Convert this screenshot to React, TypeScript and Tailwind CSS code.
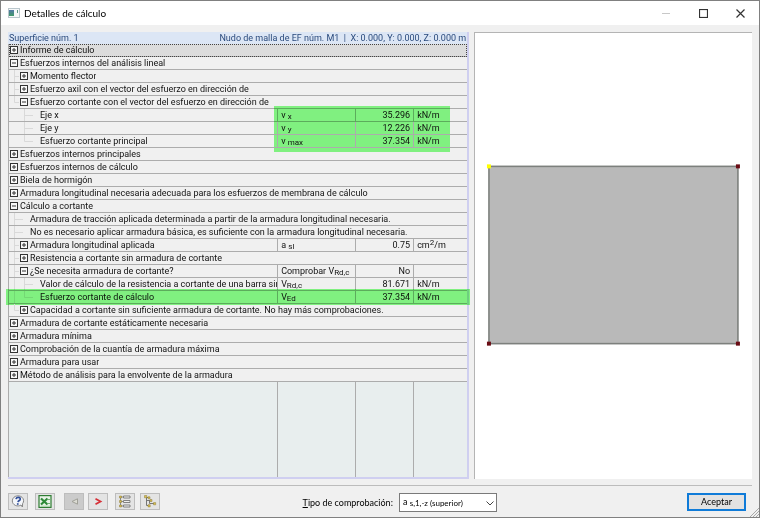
import React from "react";
import clsx from "clsx";

type Guide = "blank" | "line" | "tee" | "end";

interface DetailRow {
  label: string;
  guides?: Guide[];
  toggle?: "plus" | "minus";
  values?: [React.ReactNode, string, React.ReactNode];
  highlight?: "block" | "row";
}

const sym = (base: string, sub: string) => (
  <>
    {base}
    <sub className="relative top-px align-baseline text-[8px] leading-none">{sub}</sub>
  </>
);

const rows: DetailRow[] = [
  { label: "Informe de cálculo", toggle: "plus" },
  { label: "Esfuerzos internos del análisis lineal", toggle: "minus" },
  { label: "Momento flector", guides: ["tee"], toggle: "plus" },
  { label: "Esfuerzo axil con el vector del esfuerzo en dirección de", guides: ["tee"], toggle: "plus" },
  { label: "Esfuerzo cortante con el vector del esfuerzo en dirección de", guides: ["end"], toggle: "minus" },
  { label: "Eje x", guides: ["blank", "tee"], values: [sym("v ", "x"), "35.296", "kN/m"], highlight: "block" },
  { label: "Eje y", guides: ["blank", "tee"], values: [sym("v ", "y"), "12.226", "kN/m"] },
  { label: "Esfuerzo cortante principal", guides: ["blank", "end"], values: [sym("v ", "max"), "37.354", "kN/m"] },
  { label: "Esfuerzos internos principales", toggle: "plus" },
  { label: "Esfuerzos internos de cálculo", toggle: "plus" },
  { label: "Biela de hormigón", toggle: "plus" },
  { label: "Armadura longitudinal necesaria adecuada para los esfuerzos de membrana de cálculo", toggle: "plus" },
  { label: "Cálculo a cortante", toggle: "minus" },
  { label: "Armadura de tracción aplicada determinada a partir de la armadura longitudinal necesaria.", guides: ["tee"] },
  { label: "No es necesario aplicar armadura básica, es suficiente con la armadura longitudinal necesaria.", guides: ["tee"] },
  {
    label: "Armadura longitudinal aplicada",
    guides: ["tee"],
    toggle: "plus",
    values: [
      sym("a ", "sl"),
      "0.75",
      <>
        cm<sup className="relative -top-[3px] align-baseline text-[8px] leading-none">2</sup>/m
      </>,
    ],
  },
  { label: "Resistencia a cortante sin armadura de cortante", guides: ["tee"], toggle: "plus" },
  {
    label: "¿Se necesita armadura de cortante?",
    guides: ["tee"],
    toggle: "minus",
    values: [sym("Comprobar V", "Rd,c"), "No", ""],
  },
  {
    label: "Valor de cálculo de la resistencia a cortante de una barra sin a",
    guides: ["line", "tee"],
    values: [sym("V", "Rd,c"), "81.671", "kN/m"],
  },
  {
    label: "Esfuerzo cortante de cálculo",
    guides: ["line", "end"],
    values: [sym("V", "Ed"), "37.354", "kN/m"],
    highlight: "row",
  },
  {
    label: "Capacidad a cortante sin suficiente armadura de cortante. No hay más comprobaciones.",
    guides: ["end"],
    toggle: "plus",
  },
  { label: "Armadura de cortante estáticamente necesaria", toggle: "plus" },
  { label: "Armadura mínima", toggle: "plus" },
  { label: "Comprobación de la cuantía de armadura máxima", toggle: "plus" },
  { label: "Armadura para usar", toggle: "plus" },
  { label: "Método de análisis para la envolvente de la armadura", toggle: "plus" },
];

const guidePaths: Record<Guide, string> = {
  blank: "",
  line: "M5.5 0V13",
  tee: "M5.5 0V13M5.5 6.5H10",
  end: "M5.5 0V6.5H10",
};

const TreeGuide = ({ d }: { d: string }) => (
  <svg width="10" height="13" viewBox="0 0 10 13" className="shrink-0" fill="none" stroke="#d9d9d9">
    <path d={d} />
  </svg>
);

const Toggle = ({ type, label }: { type: "plus" | "minus"; label: string }) => (
  <button type="button" aria-label={label} aria-expanded={type === "minus"} className="h-3 w-[10px] shrink-0">
    <svg width="10" height="12" viewBox="0 0 10 12" fill="none" stroke="#333">
      <rect x="1.5" y="2.5" width="7" height="7" fill="#f8f8f8" />
      <path d={type === "plus" ? "M3 6H7M5 4V8" : "M3 6H7"} />
    </svg>
  </button>
);

const Row = ({ row, selected }: { row: DetailRow; selected: boolean }) => {
  const { label, guides = [], toggle, values, highlight } = row;
  return (
    <tr className={clsx("relative h-[13px]", selected && "bg-[#dcdcdc] outline-1 -outline-offset-1 outline-dotted outline-[#444]")}>
      <td colSpan={values ? 1 : 4} className="h-[13px] overflow-hidden border-b border-[#acacac] p-0">
        <div className="flex h-3 items-center overflow-hidden">
          {guides.map((guide, i) => (
            <TreeGuide key={i} d={guidePaths[guide]} />
          ))}
          {toggle ? <Toggle type={toggle} label={label} /> : <TreeGuide d="M0 6.5H4" />}
          <span className="ml-px min-w-0 overflow-hidden whitespace-nowrap">{label}</span>
        </div>
        {highlight === "block" && (
          <span className="pointer-events-none absolute -top-[3px] right-[17px] h-[46px] w-[176px] bg-[#88ff88] mix-blend-multiply" />
        )}
        {highlight === "row" && (
          <span className="pointer-events-none absolute -inset-x-[3px] -top-0.5 h-4 bg-[#88ff88] mix-blend-multiply" />
        )}
      </td>
      {values?.map((value, i) => (
        <td
          key={i}
          className={clsx(
            "h-[13px] border-b border-l border-[#acacac] p-0 whitespace-nowrap",
            i === 1 ? "pr-[3px] text-right" : "pl-[3px]"
          )}
        >
          <div className="h-3">{value}</div>
        </td>
      ))}
    </tr>
  );
};

const ToolButton = ({
  label,
  className,
  children,
}: {
  label: string;
  className?: string;
  children: React.ReactNode;
}) => (
  <button
    type="button"
    aria-label={label}
    className={clsx("flex h-[17px] w-5 items-center justify-center border border-[#bdbdbd]", className ?? "bg-[#e4e4e4]")}
  >
    {children}
  </button>
);

const TitleBar = () => (
  <header className="flex h-6 shrink-0 items-center bg-white pl-[7px] pr-[14px]">
    <svg width="12" height="10" viewBox="0 0 12 10">
      <defs>
        <linearGradient id="pane" x1="0" y1="0" x2="0" y2="1">
          <stop offset="0" stopColor="#5478a8" />
          <stop offset="1" stopColor="#3f9a68" />
        </linearGradient>
      </defs>
      <rect x="0.5" y="0.5" width="11" height="9" fill="#f6f8f9" stroke="#b9c6cc" />
      <rect x="1" y="2" width="5" height="6" fill="url(#pane)" />
      <path d="M9.5 2V5" stroke="#5f9a8a" />
    </svg>
    <h1 className="ml-1 font-['Lato',sans-serif] text-[10px] text-black">Detalles de cálculo</h1>
    <div className="ml-auto flex items-center gap-7 text-[#333]">
      <button type="button" aria-label="Minimizar" className="text-[#c8c8c8]">
        <svg width="9" height="9" viewBox="0 0 9 9" stroke="currentColor" fill="none">
          <path d="M0 4.5H8" />
        </svg>
      </button>
      <button type="button" aria-label="Maximizar">
        <svg width="9" height="9" viewBox="0 0 9 9" stroke="currentColor" fill="none">
          <rect x="0.5" y="0.5" width="8" height="8" strokeWidth="1.2" />
        </svg>
      </button>
      <button type="button" aria-label="Cerrar">
        <svg width="9" height="9" viewBox="0 0 9 9" stroke="currentColor" fill="none">
          <path d="M0.5 0.5L8.5 8.5M8.5 0.5L0.5 8.5" strokeWidth="1.2" />
        </svg>
      </button>
    </div>
  </header>
);

const Preview = () => (
  <section className="min-w-0 flex-[278] border-l border-t border-[#b4b4b4] bg-white">
    <svg viewBox="0 0 278 446" className="h-full w-full">
      <rect x="14" y="133" width="250" height="178" fill="#b9b9b9" stroke="#7d807d" strokeWidth="1.6" />
      <rect x="12" y="131" width="4" height="4" fill="#ffff00" />
      <rect x="262" y="131" width="4" height="4" fill="#6a0c14" />
      <rect x="12" y="309" width="4" height="4" fill="#6a0c14" />
      <rect x="262" y="309" width="4" height="4" fill="#6a0c14" />
    </svg>
  </section>
);

const Footer = () => (
  <footer className="mx-[7px] mt-[6px] flex h-8 shrink-0 items-start border-t border-[#bcbcbc] pt-[7px] font-['Lato',sans-serif]">
    <div className="flex gap-[7px]">
      <ToolButton label="Ayuda">
        <svg width="14" height="13" viewBox="0 0 14 13">
          <path
            d="M7 .8C3.8 .8 1.3 3 1.3 5.9c0 2 1.2 3.6 3 4.5 2 .9 4.2.6 5.7-.4l1.4 2 .2-3.4c.7-.9 1-1.8 1-2.9C12.6 3 10.2.8 7 .8Z"
            fill="#f4f6fa"
            stroke="#858585"
          />
          <path d="M5 4.2C5.2 2.8 6.1 2.2 7.3 2.3c1.4.1 2.1.9 1.9 2C9 5.6 7.3 5.5 7 7.2" fill="none" stroke="#33509a" strokeWidth="1.7" />
          <rect x="5.9" y="8.2" width="1.7" height="1.6" fill="#33509a" />
        </svg>
      </ToolButton>
      <ToolButton label="Exportar a Excel">
        <svg width="14" height="13" viewBox="0 0 14 13">
          <rect x="1" y="0.6" width="12" height="11.8" fill="#e9f3e8" stroke="#2f7d33" strokeWidth="1.2" />
          <path d="M3 3.5L9.5 9.5M9.5 3.5L3 9.5" stroke="#2e8a38" strokeWidth="2.2" />
          <path d="M9.5 4.5H12M9.5 8.5H12" stroke="#6fb072" />
          <path d="M3 11.2H12" stroke="#a9d0a8" />
        </svg>
      </ToolButton>
    </div>
    <div className="ml-[9px] flex gap-1">
      <ToolButton label="Anterior" className="bg-[#cbcbcb]">
        <svg width="9" height="9" viewBox="0 0 9 9" fill="none">
          <path d="M7.5 1.8L2 4.5L7.5 7.2Z" fill="#dcdcd4" stroke="#a0a098" />
        </svg>
      </ToolButton>
      <ToolButton label="Siguiente">
        <svg width="9" height="9" viewBox="0 0 9 9" fill="none">
          <path d="M1.5 1.8L6.5 4.5L1.5 7.2" stroke="#d63138" strokeWidth="1.8" />
        </svg>
      </ToolButton>
    </div>
    <div className="ml-[7px] flex gap-[5px]">
      <ToolButton label="Contraer todo">
        <svg width="14" height="13" viewBox="0 0 14 13" fill="none">
          <path d="M2.5 2V11M2.5 2H5M2.5 6.5H5M2.5 11H5" stroke="#888" />
          <path d="M1.5 1h2v2h-2ZM1.5 5.5h2v2h-2ZM1.5 10h2v2h-2Z" fill="#d8bd4c" stroke="#8a7a3a" strokeWidth="0.5" />
          <path d="M5.5 1h6.5v2h-6.5ZM5.5 5.5h6.5v2h-6.5ZM5.5 10h6.5v2h-6.5Z" fill="#eee" stroke="#777" strokeWidth="0.9" />
        </svg>
      </ToolButton>
      <ToolButton label="Expandir todo">
        <svg width="14" height="13" viewBox="0 0 14 13" fill="none">
          <path d="M3.5 2V10.5H6M3.5 5.5H8M6.5 5.5V8.5H11M3.5 2.5H6" stroke="#777" />
          <path
            d="M1.5 .5h2.3v2.3h-2.3ZM5 1.8h2v2h-2ZM7 4.5h2v2h-2ZM5 9.7h2.2v2.2h-2.2ZM10.5 7.6h2.2v2.2h-2.2Z"
            fill="#dcc24e"
            stroke="#8a7a3a"
            strokeWidth="0.5"
          />
        </svg>
      </ToolButton>
    </div>
    <div className="flex-[3]" />
    <div className="flex items-center text-black">
      <label htmlFor="check-type" className="text-[9px] leading-[19px]">
        <span className="underline">T</span>ipo de comprobación:
      </label>
      <div className="relative ml-1.5 h-[19px] w-[98px]">
        <select
          id="check-type"
          className="block h-full w-full appearance-none border border-[#7a7a7a] bg-white text-[9px] text-transparent"
        >
          <option>as,1,-z (superior)</option>
        </select>
        <span aria-hidden className="pointer-events-none absolute inset-y-0 left-1 text-[9px] leading-[18px] whitespace-nowrap">
          a <sub className="relative top-px align-baseline text-[8px] leading-none">s,1,-z (superior)</sub>
        </span>
        <svg width="8" height="5" viewBox="0 0 8 5" className="pointer-events-none absolute right-[3px] top-2" fill="none" stroke="#444">
          <path d="M0.5 0.5L4 4L7.5 0.5" />
        </svg>
      </div>
    </div>
    <div className="flex-[4]" />
    <button type="button" className="mr-1.5 h-[18px] w-[59px] border-2 border-[#0f7bd8] bg-[#e2e2e2] text-[9px] leading-[14px] text-black">
      Aceptar
    </button>
  </footer>
);

const App: React.FC = () => (
  <div className="relative flex min-h-screen flex-col border border-[#808080] bg-[#f0f0f0]">
    <TitleBar />
    <main className="flex flex-1 gap-[5px] px-[7px] pt-[7px]">
      <section className="flex min-w-0 flex-[461] flex-col border-b-2 border-r-2 border-[#cfcff0] font-['Roboto',sans-serif] text-[9px] leading-[13px] text-[#111]">
        <div className="flex h-3 shrink-0 justify-between bg-[#dce6f5] px-px text-[#2a4a7c]">
          <span>Superficie núm. 1</span>
          <span>Nudo de malla de EF núm. M1 &nbsp;|&nbsp; X: 0.000, Y: 0.000, Z: 0.000 m</span>
        </div>
        <table className="w-full table-fixed border-separate border-spacing-0 border-l border-[#acacac]">
          <colgroup>
            <col />
            <col className="w-[78px]" />
            <col className="w-[58px]" />
            <col className="w-[54px]" />
          </colgroup>
          <tbody>
            {rows.map((row, i) => (
              <Row key={row.label} row={row} selected={i === 0} />
            ))}
          </tbody>
        </table>
        <div className="grid flex-1 grid-cols-[1fr_78px_58px_54px] border-l border-[#acacac] bg-[#e8eeee]">
          <div />
          <div className="border-l border-[#acacac]" />
          <div className="border-l border-[#acacac]" />
          <div className="border-l border-[#acacac]" />
        </div>
      </section>
      <Preview />
    </main>
    <Footer />
    <svg width="9" height="9" viewBox="0 0 9 9" className="absolute bottom-0 right-0" stroke="#a8a8a8" fill="none">
      <path d="M0 9L9 0M3 9L9 3M6 9L9 6" />
    </svg>
  </div>
);

export default App;
